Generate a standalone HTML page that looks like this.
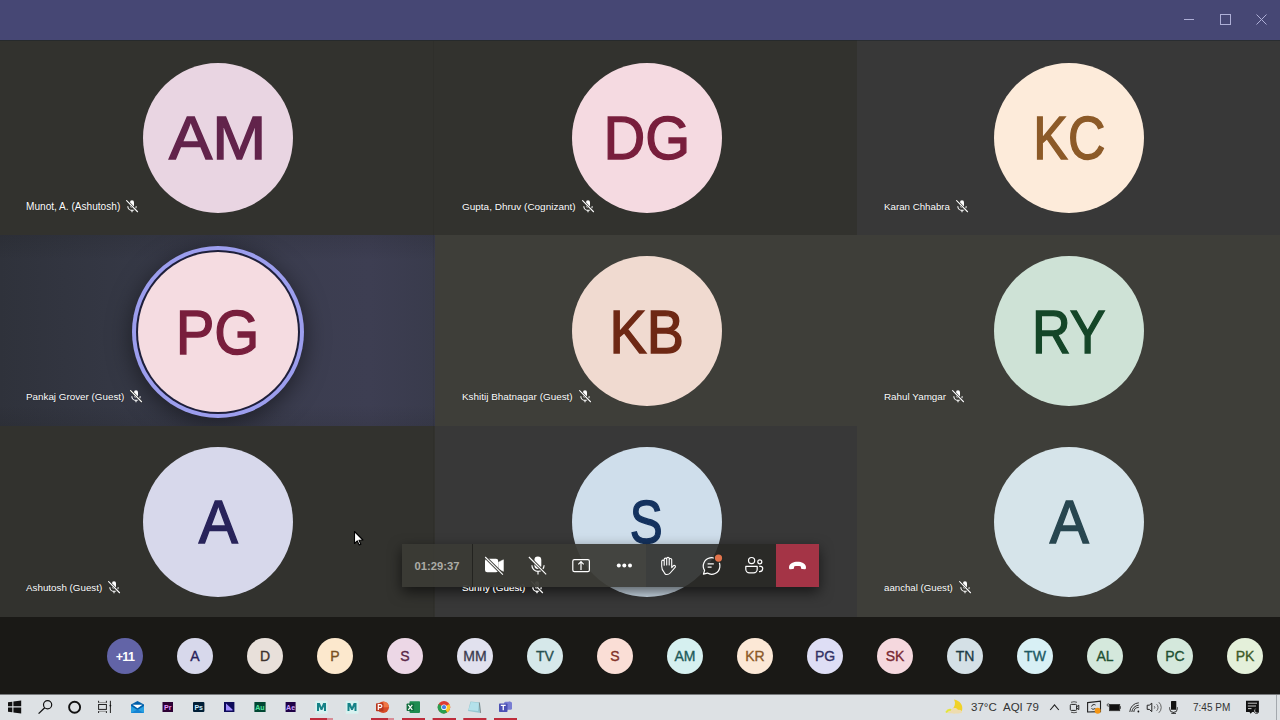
<!DOCTYPE html>
<html><head><meta charset="utf-8"><style>
*{margin:0;padding:0;box-sizing:border-box}
html,body{width:1280px;height:720px;overflow:hidden;background:#1a1916;font-family:"Liberation Sans", sans-serif}
.abs{position:absolute}
.tile{position:absolute;overflow:hidden}
.av{position:absolute;border-radius:50%;display:flex;align-items:center;justify-content:center;font-size:61px;line-height:1;-webkit-text-stroke:1.4px currentColor}
.nm{position:absolute;color:#fff;font-size:10.2px;white-space:nowrap;display:flex;align-items:center;text-shadow:0 0 1px rgba(0,0,0,.6)}
.sm{position:absolute;width:36px;height:36px;border-radius:50%;top:638px;font-size:14px;-webkit-text-stroke:0.35px currentColor;display:flex;align-items:center;justify-content:center;line-height:1}
.tt{position:absolute;font-size:12px;color:#333;white-space:nowrap;line-height:1}
</style></head><body>

<div class="abs" style="left:0;top:0;width:1280px;height:40px;background:rgb(70,71,116)"></div>
<svg class="abs" style="left:1180px;top:10px" width="95" height="20" viewBox="0 0 95 20"><path d="M4 9.5h10" stroke="#aeafd6" stroke-width="1"/><rect x="40.5" y="4.5" width="10" height="10" fill="none" stroke="#aeafd6" stroke-width="1"/><path d="M76.5 4.5l10 10M86.5 4.5l-10 10" stroke="#aeafd6" stroke-width="1"/></svg>
<div class="tile" style="left:0px;top:40px;width:435px;height:195px;background:rgb(50,50,46)">
<div class="av" style="left:143.0px;top:22.5px;width:150px;height:150px;background:rgb(233,213,226);color:rgb(98,35,75)"><span style="margin-top:2px;transform:scaleX(1.063)">AM</span></div>
<div class="nm" style="left:26px;top:160px;height:13px;font-size:10.10px">Munot, A. (Ashutosh)<svg width="13" height="13" viewBox="0 0 13 13" style="margin-left:6px"><rect x="4" y="0.2" width="4" height="7.5" rx="2" fill="#fff"/><path d="M1.8 6.2a4.2 4.2 0 0 0 8.4 0M6 10.4v1.8" stroke="#fff" stroke-width="1.1" fill="none"/><path d="M0.3 0.3L11.8 12" stroke="#2d2d2a" stroke-width="2.4"/><path d="M0.3 0.3L11.8 12" stroke="#fff" stroke-width="1.1"/></svg></div>
</div>
<div class="tile" style="left:435px;top:40px;width:422px;height:195px;background:rgb(50,50,46)">
<div class="av" style="left:136.5px;top:22.5px;width:150px;height:150px;background:rgb(245,218,225);color:rgb(120,30,60)"><span style="margin-top:2px;transform:scaleX(0.947)">DG</span></div>
<div class="nm" style="left:27px;top:160px;height:13px;font-size:9.98px">Gupta, Dhruv (Cognizant)<svg width="13" height="13" viewBox="0 0 13 13" style="margin-left:6px"><rect x="4" y="0.2" width="4" height="7.5" rx="2" fill="#fff"/><path d="M1.8 6.2a4.2 4.2 0 0 0 8.4 0M6 10.4v1.8" stroke="#fff" stroke-width="1.1" fill="none"/><path d="M0.3 0.3L11.8 12" stroke="#2d2d2a" stroke-width="2.4"/><path d="M0.3 0.3L11.8 12" stroke="#fff" stroke-width="1.1"/></svg></div>
</div>
<div class="tile" style="left:857px;top:40px;width:423px;height:195px;background:rgb(56,56,56)">
<div class="av" style="left:137.0px;top:22.5px;width:150px;height:150px;background:rgb(253,235,218);color:rgb(140,90,40)"><span style="margin-top:2px;transform:scaleX(0.85)">KC</span></div>
<div class="nm" style="left:27px;top:160px;height:13px;font-size:9.74px">Karan Chhabra<svg width="13" height="13" viewBox="0 0 13 13" style="margin-left:6px"><rect x="4" y="0.2" width="4" height="7.5" rx="2" fill="#fff"/><path d="M1.8 6.2a4.2 4.2 0 0 0 8.4 0M6 10.4v1.8" stroke="#fff" stroke-width="1.1" fill="none"/><path d="M0.3 0.3L11.8 12" stroke="#2d2d2a" stroke-width="2.4"/><path d="M0.3 0.3L11.8 12" stroke="#fff" stroke-width="1.1"/></svg></div>
</div>
<div class="tile" style="left:0px;top:235px;width:435px;height:191px;background:linear-gradient(180deg, rgba(20,20,20,.12) 0px, rgba(20,20,20,0) 25px, rgba(20,20,20,0) 170px, rgba(20,20,20,.1) 191px), linear-gradient(90deg, rgb(47,50,59) 0%, rgb(53,56,69) 30%, rgb(59,61,79) 65%, rgb(61,62,82) 85%, rgb(57,59,76) 100%)">
<div class="av" style="left:132.0px;top:11.0px;width:172px;height:172px;background:rgb(156,158,238);box-shadow:0 5px 24px rgba(0,0,0,.5)"></div>
<div class="av" style="left:136.0px;top:15.0px;width:164px;height:164px;background:rgb(30,31,58)"></div>
<div class="av" style="left:138.0px;top:17.0px;width:160px;height:160px;background:rgb(245,220,225);color:rgb(120,30,60);font-size:63px"><span style="margin-top:0px;transform:scaleX(0.92)">PG</span></div>
<div class="nm" style="left:26px;top:154.5px;height:13px;font-size:9.84px">Pankaj Grover (Guest)<svg width="13" height="13" viewBox="0 0 13 13" style="margin-left:6px"><rect x="4" y="0.2" width="4" height="7.5" rx="2" fill="#fff"/><path d="M1.8 6.2a4.2 4.2 0 0 0 8.4 0M6 10.4v1.8" stroke="#fff" stroke-width="1.1" fill="none"/><path d="M0.3 0.3L11.8 12" stroke="#2d2d2a" stroke-width="2.4"/><path d="M0.3 0.3L11.8 12" stroke="#fff" stroke-width="1.1"/></svg></div>
</div>
<div class="tile" style="left:435px;top:235px;width:422px;height:191px;background:rgb(62,62,57)">
<div class="av" style="left:136.5px;top:20.5px;width:150px;height:150px;background:rgb(240,218,208);color:rgb(110,40,20)"><span style="margin-top:4px;transform:scaleX(0.914)">KB</span></div>
<div class="nm" style="left:27px;top:154.5px;height:13px;font-size:9.92px">Kshitij Bhatnagar (Guest)<svg width="13" height="13" viewBox="0 0 13 13" style="margin-left:6px"><rect x="4" y="0.2" width="4" height="7.5" rx="2" fill="#fff"/><path d="M1.8 6.2a4.2 4.2 0 0 0 8.4 0M6 10.4v1.8" stroke="#fff" stroke-width="1.1" fill="none"/><path d="M0.3 0.3L11.8 12" stroke="#2d2d2a" stroke-width="2.4"/><path d="M0.3 0.3L11.8 12" stroke="#fff" stroke-width="1.1"/></svg></div>
</div>
<div class="tile" style="left:857px;top:235px;width:423px;height:191px;background:rgb(62,62,57)">
<div class="av" style="left:137.0px;top:20.5px;width:150px;height:150px;background:rgb(206,226,214);color:rgb(20,70,40)"><span style="margin-top:4px;transform:scaleX(0.88)">RY</span></div>
<div class="nm" style="left:27px;top:154.5px;height:13px;font-size:9.87px">Rahul Yamgar<svg width="13" height="13" viewBox="0 0 13 13" style="margin-left:6px"><rect x="4" y="0.2" width="4" height="7.5" rx="2" fill="#fff"/><path d="M1.8 6.2a4.2 4.2 0 0 0 8.4 0M6 10.4v1.8" stroke="#fff" stroke-width="1.1" fill="none"/><path d="M0.3 0.3L11.8 12" stroke="#2d2d2a" stroke-width="2.4"/><path d="M0.3 0.3L11.8 12" stroke="#fff" stroke-width="1.1"/></svg></div>
</div>
<div class="tile" style="left:0px;top:426px;width:435px;height:191px;background:rgb(50,50,46)">
<div class="av" style="left:143.0px;top:20.5px;width:150px;height:150px;background:rgb(215,216,235);color:rgb(40,35,90)"><span style="margin-top:2px;transform:scaleX(0.96)">A</span></div>
<div class="nm" style="left:26px;top:154.5px;height:13px;font-size:9.81px">Ashutosh (Guest)<svg width="13" height="13" viewBox="0 0 13 13" style="margin-left:6px"><rect x="4" y="0.2" width="4" height="7.5" rx="2" fill="#fff"/><path d="M1.8 6.2a4.2 4.2 0 0 0 8.4 0M6 10.4v1.8" stroke="#fff" stroke-width="1.1" fill="none"/><path d="M0.3 0.3L11.8 12" stroke="#2d2d2a" stroke-width="2.4"/><path d="M0.3 0.3L11.8 12" stroke="#fff" stroke-width="1.1"/></svg></div>
</div>
<div class="tile" style="left:435px;top:426px;width:422px;height:191px;background:rgb(56,56,56)">
<div class="av" style="left:136.5px;top:20.5px;width:150px;height:150px;background:rgb(207,222,235);color:rgb(20,50,95)"><span style="margin-top:2px;transform:scaleX(0.81)">S</span></div>
<div class="nm" style="left:27px;top:154.5px;height:13px;font-size:9.84px">Sunny (Guest)<svg width="13" height="13" viewBox="0 0 13 13" style="margin-left:6px"><rect x="4" y="0.2" width="4" height="7.5" rx="2" fill="#fff"/><path d="M1.8 6.2a4.2 4.2 0 0 0 8.4 0M6 10.4v1.8" stroke="#fff" stroke-width="1.1" fill="none"/><path d="M0.3 0.3L11.8 12" stroke="#2d2d2a" stroke-width="2.4"/><path d="M0.3 0.3L11.8 12" stroke="#fff" stroke-width="1.1"/></svg></div>
</div>
<div class="tile" style="left:857px;top:426px;width:423px;height:191px;background:rgb(62,62,57)">
<div class="av" style="left:137.0px;top:20.5px;width:150px;height:150px;background:rgb(214,228,234);color:rgb(40,70,80)"><span style="margin-top:2px;transform:scaleX(0.96)">A</span></div>
<div class="nm" style="left:27px;top:154.5px;height:13px;font-size:9.69px">aanchal (Guest)<svg width="13" height="13" viewBox="0 0 13 13" style="margin-left:6px"><rect x="4" y="0.2" width="4" height="7.5" rx="2" fill="#fff"/><path d="M1.8 6.2a4.2 4.2 0 0 0 8.4 0M6 10.4v1.8" stroke="#fff" stroke-width="1.1" fill="none"/><path d="M0.3 0.3L11.8 12" stroke="#2d2d2a" stroke-width="2.4"/><path d="M0.3 0.3L11.8 12" stroke="#fff" stroke-width="1.1"/></svg></div>
</div>
<div class="abs" style="left:0;top:40px;width:1280px;height:1px;background:rgba(30,36,44,.55)"></div>
<div class="abs" style="left:433px;top:41px;width:1px;height:576px;background:rgba(0,0,0,.06)"></div>
<svg class="abs" style="left:350px;top:528px" width="16" height="20" viewBox="0 0 16 20"><path d="M4.5 3.5v12l2.8-2.6 1.9 4.2 1.7-.8-1.9-4.1 3.9-.2z" fill="#fff" stroke="#000" stroke-width="1.1" stroke-linejoin="round"/></svg>
<div class="abs" style="left:402px;top:544px;width:417px;height:43px;box-shadow:0 5px 14px rgba(0,0,0,.6)"></div>
<div class="abs" style="left:402px;top:544px;width:244px;height:43px;background:rgba(58,58,53,.94)"></div>
<div class="abs" style="left:646px;top:544px;width:130px;height:43px;background:rgba(40,40,36,.88)"></div>
<div class="abs" style="left:472px;top:544px;width:1px;height:43px;background:rgba(30,30,28,.8)"></div>
<div class="abs" style="left:402px;top:544px;width:70px;height:43px;display:flex;align-items:center;justify-content:center;color:rgb(172,172,166);font-size:11.2px;font-weight:bold;padding-top:1px">01:29:37</div>
<div class="abs" style="left:776px;top:544px;width:43px;height:43px;background:rgb(164,52,70)"></div>
<div class="nm" style="left:462px;top:580.5px;height:13px;font-size:9.84px;clip-path:inset(6.8px 0 0 0)">Sunny (Guest)<svg width="13" height="13" viewBox="0 0 13 13" style="margin-left:6px"><rect x="4" y="0.2" width="4" height="7.5" rx="2" fill="#fff"/><path d="M1.8 6.2a4.2 4.2 0 0 0 8.4 0M6 10.4v1.8" stroke="#fff" stroke-width="1.1" fill="none"/><path d="M0.3 0.3L11.8 12" stroke="#2d2d2a" stroke-width="2.4"/><path d="M0.3 0.3L11.8 12" stroke="#fff" stroke-width="1.1"/></svg></div>
<svg class="abs" style="left:0;top:0" width="1280" height="720" viewBox="0 0 1280 720">
<rect x="485" y="558.7" width="13.2" height="13.6" rx="2.2" fill="#fff"/>
<path d="M498.6 562.2L503.4 559.8V571.3L498.6 568.9Z" fill="#fff" stroke="#fff" stroke-width="0.6" stroke-linejoin="round"/>
<path d="M485.2 557L502.9 574.6" stroke="rgb(58,58,53)" stroke-width="3"/>
<path d="M485.2 557L502.9 574.6" stroke="#fff" stroke-width="1.1"/>
<rect x="534.4" y="556.6" width="6.9" height="12.4" rx="3.45" fill="#fff"/>
<path d="M531.9 565.3a6.1 6.1 0 0 0 12.2 0M538 571.5v2.9" stroke="#fff" stroke-width="1.2" fill="none"/>
<path d="M528.9 557L546.2 574.3" stroke="rgb(58,58,53)" stroke-width="3"/>
<path d="M528.9 557L546.2 574.3" stroke="#fff" stroke-width="1.1"/>
<rect x="572.8" y="559.6" width="16.6" height="12" rx="1.6" fill="none" stroke="#fff" stroke-width="1.2"/>
<path d="M581 570V561.8M578.3 564.3L581 561.6L583.7 564.3" stroke="#fff" stroke-width="1.2" fill="none"/>
<circle cx="618.8" cy="565.6" r="2" fill="#fff"/><circle cx="624.3" cy="565.6" r="2" fill="#fff"/><circle cx="630" cy="565.6" r="2" fill="#fff"/>
<path d="M664 572.2C662.4 570.6 661.7 568.6 661.7 566.2V561.4a1.25 1.25 0 0 1 2.5 0V565.2V559.4a1.25 1.25 0 0 1 2.5 0V565V558.6a1.25 1.25 0 0 1 2.5 0V565V559.8a1.25 1.25 0 0 1 2.5 0V567.6L673.3 565.8a1.2 1.2 0 0 1 1.8 1.6L670.2 573C669.4 574 668.2 574.5 666.8 574.5H666C665.2 574.5 664.6 573.1 664 572.2Z" fill="none" stroke="#fff" stroke-width="1.1" stroke-linejoin="round"/>
<path d="M703.4 574.2L704.6 570.4A8.3 8.3 0 1 1 707.4 573.1Z" fill="none" stroke="#fff" stroke-width="1.2" stroke-linejoin="round"/>
<path d="M707.6 563.9H713.8M707.6 567.1H711.6" stroke="#fff" stroke-width="1.4"/>
<circle cx="718.5" cy="558.1" r="4.8" fill="rgb(40,40,36)"/>
<circle cx="718.5" cy="558.1" r="3.6" fill="rgb(226,116,76)"/>
<circle cx="751.6" cy="560.6" r="3.1" fill="none" stroke="#fff" stroke-width="1.2"/>
<path d="M745.8 566.4H757.2V569.2A3.6 3.6 0 0 1 753.6 572.8H749.4A3.6 3.6 0 0 1 745.8 569.2Z" fill="none" stroke="#fff" stroke-width="1.2" stroke-linejoin="round"/>
<circle cx="759.8" cy="561.8" r="2" fill="none" stroke="#fff" stroke-width="1.2"/>
<path d="M759.2 566.4H760.8A1.9 1.9 0 0 1 762.7 568.3V568.6A3 3 0 0 1 759.7 571.6H759" fill="none" stroke="#fff" stroke-width="1.2"/>
<path d="M789.1 566.6C789.6 563.5 793.4 561.7 797.5 561.7C801.6 561.7 805.4 563.5 805.9 566.6L806 568C806 568.9 805.3 569.3 804.6 569.3L802.3 569.1C801.5 569 801 568.5 801 567.7L800.9 566.5C799.9 566 798.7 565.9 797.5 565.9C796.3 565.9 795.1 566 794.1 566.5L794 567.7C794 568.5 793.5 569 792.7 569.1L790.4 569.3C789.7 569.3 789 568.9 789 568Z" fill="#fff"/>
</svg>
<div class="sm" style="left:107px;background:rgb(98,100,167);color:#fff;font-weight:bold;font-size:12.5px;-webkit-text-stroke:0;letter-spacing:-0.6px;padding-top:3px">+11</div>
<div class="sm" style="left:177px;background:rgb(215,216,235);color:rgb(40,35,90);">A</div>
<div class="sm" style="left:247px;background:rgb(232,224,218);color:rgb(60,50,45);">D</div>
<div class="sm" style="left:317px;background:rgb(252,232,205);color:rgb(120,80,30);">P</div>
<div class="sm" style="left:387px;background:rgb(236,215,230);color:rgb(90,40,70);">S</div>
<div class="sm" style="left:457px;background:rgb(225,225,238);color:rgb(60,60,80);">MM</div>
<div class="sm" style="left:527px;background:rgb(214,232,234);color:rgb(40,80,80);">TV</div>
<div class="sm" style="left:597px;background:rgb(250,222,214);color:rgb(130,50,40);">S</div>
<div class="sm" style="left:667px;background:rgb(214,240,240);color:rgb(30,90,90);">AM</div>
<div class="sm" style="left:737px;background:rgb(252,232,214);color:rgb(140,90,40);">KR</div>
<div class="sm" style="left:807px;background:rgb(222,222,245);color:rgb(50,50,100);">PG</div>
<div class="sm" style="left:877px;background:rgb(245,216,222);color:rgb(120,40,50);">SK</div>
<div class="sm" style="left:947px;background:rgb(212,224,230);color:rgb(30,60,70);">TN</div>
<div class="sm" style="left:1017px;background:rgb(216,240,245);color:rgb(30,90,100);">TW</div>
<div class="sm" style="left:1087px;background:rgb(212,232,220);color:rgb(30,80,50);">AL</div>
<div class="sm" style="left:1157px;background:rgb(212,232,220);color:rgb(30,80,50);">PC</div>
<div class="sm" style="left:1227px;background:rgb(228,240,218);color:rgb(60,90,40);">PK</div>
<div class="abs" style="left:0;top:694px;width:1280px;height:26px;background:rgb(221,225,228)"></div>
<div class="abs" style="left:0;top:694px;width:1280px;height:1px;background:rgb(120,122,124)"></div>
<svg class="abs" style="left:0;top:0" width="1280" height="720" viewBox="0 0 1280 720">
<path d="M8 702.3L12.3 701.7V706.3H8ZM13.4 701.5L21.2 700.5V706.3H13.4ZM8 707.4H12.3V712.3L8 711.7ZM13.4 707.4H21.2V713.6L13.4 712.5Z" fill="#111"/>
<circle cx="47.6" cy="704.8" r="4.1" fill="none" stroke="#111" stroke-width="1.2"/>
<path d="M44.7 707.8L38.6 713.6" stroke="#111" stroke-width="1.3"/>
<circle cx="74.6" cy="707.2" r="5.5" fill="none" stroke="#111" stroke-width="1.9"/>
<rect x="98.6" y="704.5" width="7.8" height="4.9" fill="none" stroke="#222" stroke-width="1"/>
<path d="M98.6 700.8V702.8M106.4 700.8V702.8M98.6 711.1V713M106.4 711.1V713M110.4 700.8V713" stroke="#222" stroke-width="1"/>
<path d="M99 702.6H106M99 711.3H106" stroke="#888" stroke-width="0.9"/>
<circle cx="110.4" cy="705.6" r="0.9" fill="#111"/>
<path d="M131 704.4L137.5 701L144 704.4V713H131Z" fill="rgb(0,95,170)"/>
<path d="M132.5 704.8H142.5L137.5 708.2Z" fill="#fff"/>
<path d="M131 706L137.5 710L144 706V713H131Z" fill="rgb(40,160,225)"/>
<path d="M131 713L137.5 709.5L144 713Z" fill="rgb(20,130,210)"/>
<rect x="162.5" y="702" width="10.5" height="10" fill="rgb(44,0,52)"/>
<rect x="193" y="702" width="11.4" height="10" rx="1" fill="rgb(0,30,54)"/>
<rect x="224" y="702" width="10.4" height="10" fill="rgb(14,10,90)"/>
<path d="M226 703.5L232.5 709.5V710.5H226Z" fill="rgb(160,140,255)"/>
<rect x="254.4" y="702" width="11.2" height="10" fill="rgb(0,70,50)"/>
<rect x="285.6" y="702" width="10" height="10" fill="rgb(30,0,70)"/>
<rect x="315.3" y="700.7" width="12.2" height="13" fill="rgb(215,242,240)"/>
<path d="M317 711V703H319.8L321.5 707L323.2 703H326V711H324V706.5L322.3 710H320.7L319 706.5V711Z" fill="rgb(20,130,135)"/>
<rect x="345.8" y="700.7" width="12.6" height="13" fill="rgb(215,242,240)"/>
<path d="M347.5 711V703H350.3L352 707L353.7 703H356.5V711H354.5V706.5L352.8 710H351.2L349.5 706.5V711Z" fill="rgb(20,130,135)"/>
<circle cx="383.2" cy="707.2" r="5.8" fill="rgb(215,75,40)"/>
<path d="M383.2 701.4A5.8 5.8 0 0 1 389 707.2H383.2Z" fill="rgb(240,120,70)"/>
<rect x="376" y="703.2" width="7.5" height="8" rx="0.8" fill="rgb(185,55,30)"/>
<path d="M378.3 710V704.6H380.4A1.5 1.5 0 0 1 380.4 707.6H378.3" fill="none" stroke="#fff" stroke-width="1.2"/>
<rect x="409.5" y="701.2" width="10.5" height="11.7" rx="0.8" fill="rgb(30,140,80)"/>
<rect x="406.6" y="703.5" width="7.5" height="7.5" rx="0.8" fill="rgb(16,110,60)"/>
<path d="M408.3 704.8L412.3 709.8M412.3 704.8L408.3 709.8" stroke="#fff" stroke-width="1.2"/>
<circle cx="444" cy="707.2" r="6.2" fill="rgb(220,60,50)"/>
<path d="M444 707.2L449.4 704.1A6.2 6.2 0 0 1 447.1 712.6Z" fill="rgb(250,200,40)"/>
<path d="M444 707.2L447.1 712.6A6.2 6.2 0 0 1 438.6 704.1Z" fill="rgb(40,160,80)"/>
<circle cx="444" cy="707.2" r="2.8" fill="#fff"/>
<circle cx="444" cy="707.2" r="2.1" fill="rgb(70,130,230)"/>
<path d="M470.5 701.6L480 702.5L480.6 712.9L468 711Z" fill="rgb(150,200,210)"/>
<path d="M471 702L479 703L478 711L468.5 710Z" fill="rgb(180,225,235)"/>
<path d="M479.3 702.5L480.6 712.9" stroke="#777" stroke-width="0.8"/>
<rect x="504" y="701.8" width="8" height="8" rx="1.5" fill="rgb(120,125,210)"/>
<circle cx="509.5" cy="703" r="1.6" fill="rgb(120,125,210)"/>
<rect x="499" y="703.5" width="8.5" height="8.5" rx="0.8" fill="rgb(75,80,180)"/>
<path d="M500.8 705.3H505.7M503.25 705.3V710.3" stroke="#fff" stroke-width="1.3"/>
<rect x="310" y="718" width="17" height="2" fill="rgb(190,45,60)"/>
<rect x="327" y="718" width="6" height="2" fill="rgb(215,140,150)"/>
<rect x="371" y="718" width="17" height="2" fill="rgb(190,45,60)"/>
<rect x="388" y="718" width="6" height="2" fill="rgb(215,140,150)"/>
<rect x="402" y="718" width="23" height="2" fill="rgb(190,45,60)"/>
<rect x="432.6" y="718" width="23.4" height="2" fill="rgb(190,45,60)"/>
<rect x="463.3" y="718" width="23.1" height="2" fill="rgb(190,45,60)"/>
<rect x="494" y="718" width="23" height="2" fill="rgb(190,45,60)"/>
<path d="M954 699.5C960 700.5 963.5 705 962 711C959 712 952 712 950 711C955 708 956 703 954 699.5Z" fill="rgb(240,210,40)"/>
<path d="M946 712C946 709 949.5 708 951.5 709.5C952.5 707.5 957 707.5 958 710C960 709.5 962.5 710.5 962 712.5C961 714 947 714.2 946 712Z" fill="rgb(238,220,175)"/>
<path d="M946 712.5C948 710 950 709.5 951 710" stroke="rgb(225,230,60)" stroke-width="2" fill="none"/>
<path d="M1050.2 710L1054.5 704.8L1058.8 710" fill="none" stroke="#222" stroke-width="1.1"/>
<rect x="1070.3" y="704.4" width="6.3" height="6" rx="1" fill="none" stroke="#222" stroke-width="1"/>
<path d="M1076.6 706.8L1078.8 705.2V709.6L1076.6 708" fill="none" stroke="#222" stroke-width="1"/>
<path d="M1071 702.3A6 4 0 0 1 1077 702.3M1071 712.2A6 4 0 0 0 1077 712.2" fill="none" stroke="#444" stroke-width="0.9"/>
<path d="M1087.6 702.6L1100.5 701.2V711.6L1087.6 712Z" fill="none" stroke="#222" stroke-width="1.1"/>
<path d="M1095.5 705A2.6 2.6 0 0 0 1091.5 706.5M1091.5 708.5A2.6 2.6 0 0 0 1095.5 708" fill="none" stroke="#222" stroke-width="1"/>
<circle cx="1097.7" cy="710.8" r="3" fill="rgb(245,150,20)"/>
<rect x="1109.5" y="704.4" width="10.2" height="6.3" fill="#111" stroke="#333" stroke-width="0.8"/>
<rect x="1119.8" y="706.2" width="1" height="2.6" fill="#333"/>
<circle cx="1108.3" cy="705" r="1.2" fill="none" stroke="#333" stroke-width="0.8"/>
<path d="M1129.8 712A9.5 9.5 0 0 1 1138.8 702.8M1131.8 712A7.5 7.5 0 0 1 1138.8 705.2M1133.8 712A5 5 0 0 1 1138.8 707.4" fill="none" stroke="#333" stroke-width="1"/>
<circle cx="1138.4" cy="711.5" r="0.9" fill="#111"/>
<path d="M1147.2 705.2H1149.3L1151.8 703.2V711.6L1149.3 709.4H1147.2Z" fill="none" stroke="#222" stroke-width="1"/>
<path d="M1154.3 706.2A1.8 1.8 0 0 1 1154.3 708.6M1156.6 704.2A4.5 4.5 0 0 1 1156.6 710.8M1158.8 702.2A7 7 0 0 1 1158.8 712.8" fill="none" stroke="#555" stroke-width="0.9"/>
<rect x="1171" y="701" width="5.3" height="8.8" rx="0.6" fill="#111"/>
<path d="M1169.6 707.3V708.5A3.9 3.9 0 0 0 1177.4 708.5V707.3M1173.6 712V713.4M1171.3 713.4H1176" fill="none" stroke="#333" stroke-width="1"/>
<path d="M1246 700.8H1258.9V712H1252.2L1250.6 713.8L1249.5 712H1246Z" fill="#111"/>
<path d="M1247.8 703.2H1257M1247.8 706H1256M1248 708.6H1251.5" stroke="#ddd" stroke-width="0.9"/>
<path d="M1256.5 708.3A2.6 2.6 0 1 0 1258.6 712.4A2 2 0 0 1 1256.5 708.3Z" fill="#ddd" stroke="#111" stroke-width="0.7"/>
<path d="M1276.5 695V720" stroke="rgb(150,155,160)" stroke-width="0.8"/>
</svg>
<div class="tt" style="left:971px;top:702px;font-size:11.5px">37°C</div>
<div class="tt" style="left:1003px;top:702px;font-size:11.5px">AQI 79</div>
<div class="tt" style="left:1193px;top:703px;font-size:10px">7:45 PM</div>
<div class="tt" style="left:162.5px;top:703.5px;width:10.5px;text-align:center;font-size:7px;font-weight:bold;color:rgb(230,150,250)">Pr</div>
<div class="tt" style="left:193px;top:703.5px;width:11.4px;text-align:center;font-size:7px;font-weight:bold;color:rgb(200,235,255)">Ps</div>
<div class="tt" style="left:254.4px;top:703.5px;width:11.2px;text-align:center;font-size:7px;font-weight:bold;color:rgb(80,230,160)">Au</div>
<div class="tt" style="left:285.6px;top:703.5px;width:10px;text-align:center;font-size:7px;font-weight:bold;color:rgb(200,160,255)">Ae</div>
</body></html>
